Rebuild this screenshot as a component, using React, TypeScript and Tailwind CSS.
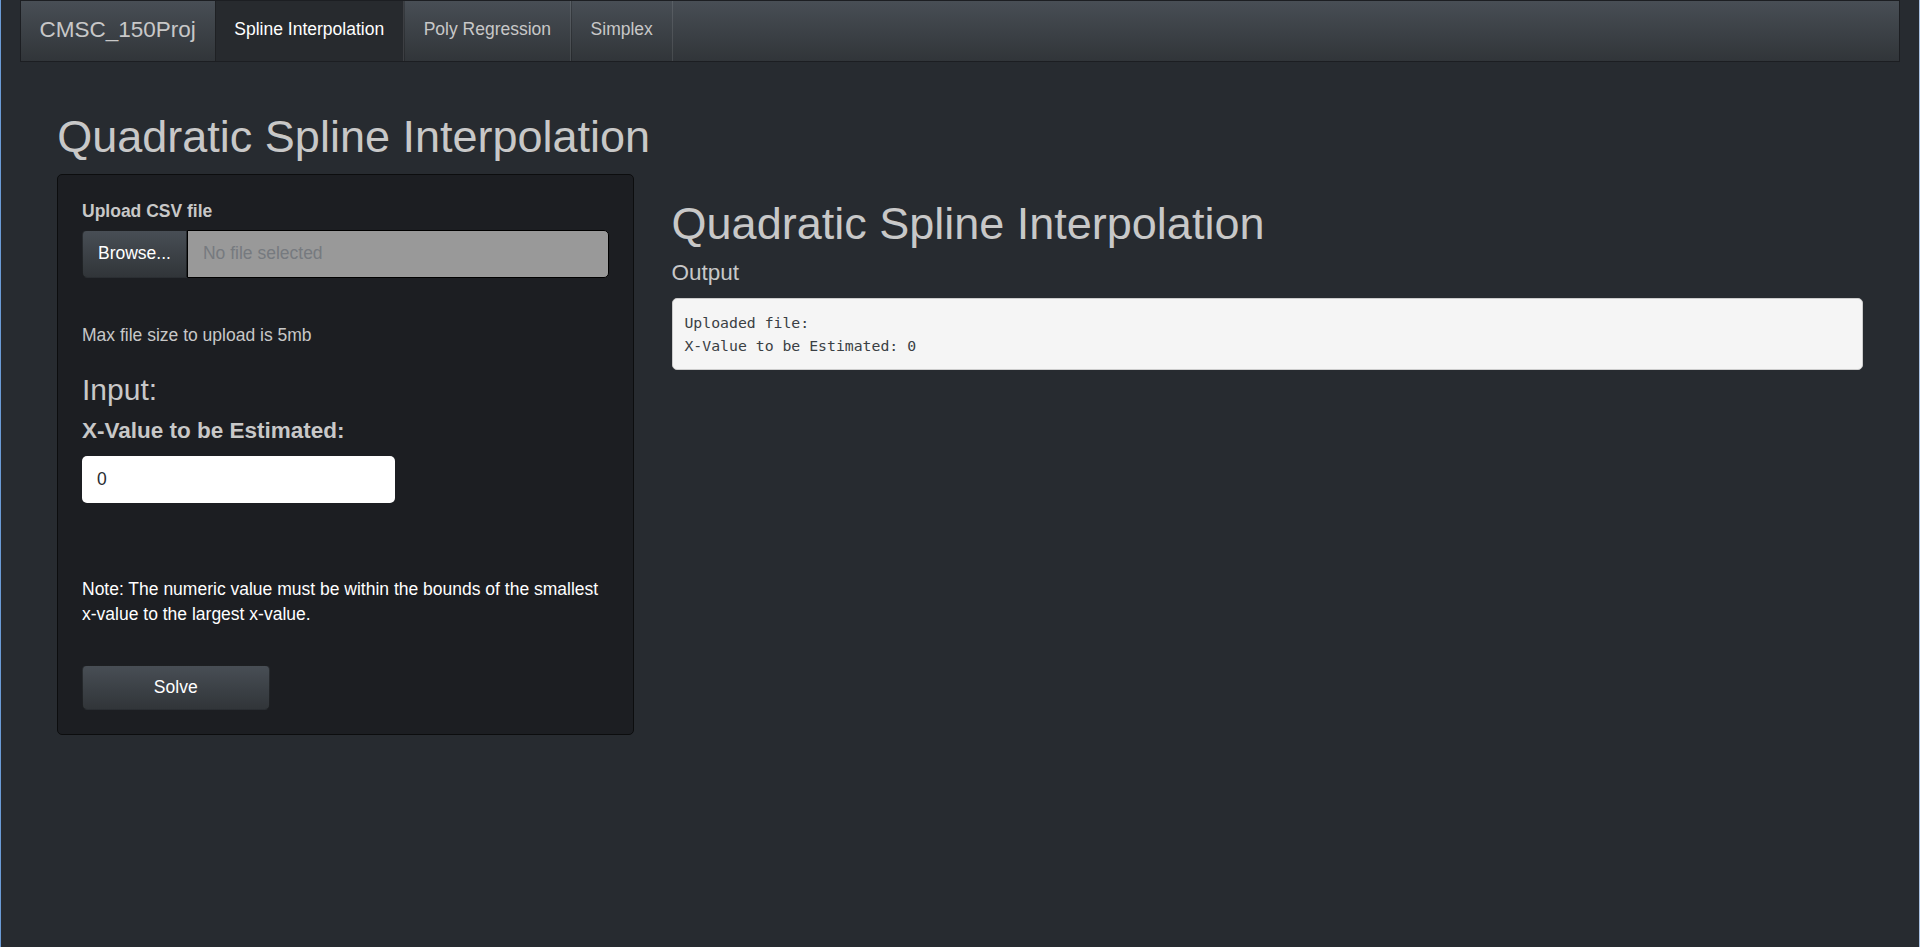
export default function App() {
  const tabs = [
    { label: "Spline Interpolation", active: true },
    { label: "Poly Regression", active: false },
    { label: "Simplex", active: false },
  ];

  return (
    <div className="min-h-screen bg-[#272b30] border-l border-[#6b9bd6] border-r border-r-[#a9c0e0] font-['Liberation_Sans',Arial,sans-serif] text-[17.5px] leading-[25px] text-[#c8c8c8]">
      {/* navbar */}
      <div className="px-[18.75px]">
        <nav className="flex h-[62px] border border-[#1c1e22] bg-linear-to-b from-[#484e55] via-[#3a3f44] via-60% to-[#313539]">
          <a className="flex items-center pb-1 px-[18.75px] text-[22.5px] text-[#c8c8c8]">
            CMSC_150Proj
          </a>
          <ul className="flex">
            {tabs.map((tab) => (
              <li key={tab.label} className="flex">
                <a
                  className={
                    tab.active
                      ? "flex items-center pb-1 px-[18.75px] bg-[#272a2e] text-white border-l border-black/20 border-r border-r-white/10"
                      : "flex items-center pb-1 px-[18.75px] text-[#c8c8c8] border-l border-black/20 border-r border-r-white/10"
                  }
                >
                  {tab.label}
                </a>
              </li>
            ))}
          </ul>
        </nav>
      </div>

      <div className="pt-[25px] px-[56.25px]">
        <h1 className="mt-[25px] mb-[12.5px] text-[45px] leading-[1.1] text-[#c8c8c8]">
          Quadratic Spline Interpolation
        </h1>

        <div className="flex -mx-[18.75px]">
          {/* sidebar */}
          <div className="w-1/3 px-[18.75px]">
            <div className="bg-[#1c1e22] border border-[#0c0d0e] rounded-[5px] p-[23.75px]">
              <label className="block mb-[6.25px] font-bold">Upload CSV file</label>
              <div className="flex h-[47.5px]">
                <button className="px-[15px] rounded-l-[5px] bg-linear-to-b from-[#484e55] via-[#3a3f44] via-60% to-[#313539] text-white border border-black/40">
                  Browse...
                </button>
                <div className="flex-1 flex items-center px-[15px] bg-[#999] border border-black rounded-r-[5px] text-[#767a7f]">
                  No file selected
                </div>
              </div>
              <p className="mt-[45.5px]">Max file size to upload is 5mb</p>
              <h3 className="mt-[25px] mb-[12.5px] text-[30px] leading-[1.1]">Input:</h3>
              <h4 className="mb-[12.5px] text-[22.5px] leading-[1.1] font-bold">
                X-Value to be Estimated:
              </h4>
              <div className="w-[312.5px] h-[47.5px] flex items-center px-[15px] bg-white rounded-[5px] text-[#272b30]">
                0
              </div>
              <p className="mt-[73.5px] text-white">
                Note: The numeric value must be within the bounds of the smallest{" "}
                <span className="whitespace-nowrap">x-value</span> to the largest{" "}
                <span className="whitespace-nowrap">x-value.</span>
              </p>
              <button className="mt-[38.5px] w-[187.5px] h-[45px] rounded-[5px] bg-linear-to-b from-[#484e55] via-[#3a3f44] via-60% to-[#313539] text-white border border-black/40">
                Solve
              </button>
            </div>
          </div>

          {/* main */}
          <div className="w-2/3 px-[18.75px]">
            <h1 className="mt-[25px] mb-[12.5px] text-[45px] leading-[1.1] text-[#c8c8c8]">
              Quadratic Spline Interpolation
            </h1>
            <h4 className="mt-[12.5px] mb-[12.5px] text-[22.5px] leading-[1.1]">Output</h4>
            <pre className="p-[11.875px] bg-[#f5f5f5] border border-[#cccccc] rounded-[5px] text-[#3a3f44] font-['DejaVu_Sans_Mono',monospace] text-[14.8px] leading-[23.2px]">
              {"Uploaded file:\nX-Value to be Estimated: 0"}
            </pre>
          </div>
        </div>
      </div>
    </div>
  );
}
